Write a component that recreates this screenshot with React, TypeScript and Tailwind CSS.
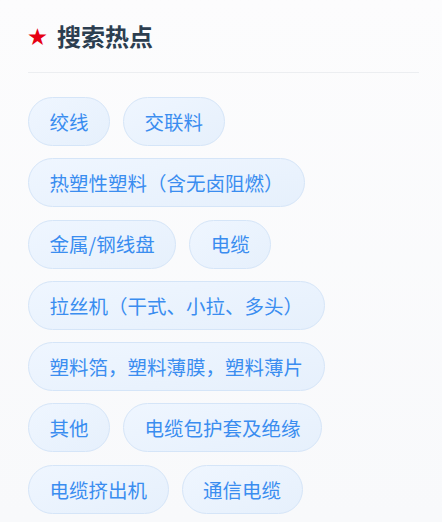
import React from "react";

const tags = [
  ["绞线", "交联料"],
  ["热塑性塑料（含无卤阻燃）"],
  ["金属/钢线盘", "电缆"],
  ["拉丝机（干式、小拉、多头）"],
  ["塑料箔，塑料薄膜，塑料薄片"],
  ["其他", "电缆包护套及绝缘"],
  ["电缆挤出机", "通信电缆"],
];

export default function App() {
  return (
    <div
      className="w-[442px] h-[522px] overflow-hidden bg-gradient-to-b from-[#fcfcfd] to-[#f8f9fb] pl-7 pr-[23px] pt-5"
      style={{ fontFamily: '"Noto Sans CJK SC", "Noto Sans", sans-serif' }}
    >
      <div className="flex items-center h-8">
        <span className="text-[#e60012] text-[19px] leading-none w-[29px] -mt-[1px]">★</span>
        <span className="text-[24px] font-bold text-[#2c3e50] leading-8">搜索热点</span>
      </div>
      <div className="mt-5 h-px bg-[#eceef1]" />
      <div className="mt-6 flex flex-col gap-y-[12.3px]">
        {tags.map((row, i) => (
          <div key={i} className="flex gap-x-[13px]">
            {row.map((t) => (
              <div
                key={t}
                className="h-[49px] flex items-center px-[20.5px] rounded-full border border-[#d5e5f8] bg-gradient-to-br from-[#eff6ff] to-[#e6f0fc] text-[#3a8df0] text-[19.5px] whitespace-nowrap"
              >
                {t}
              </div>
            ))}
          </div>
        ))}
      </div>
    </div>
  );
}
